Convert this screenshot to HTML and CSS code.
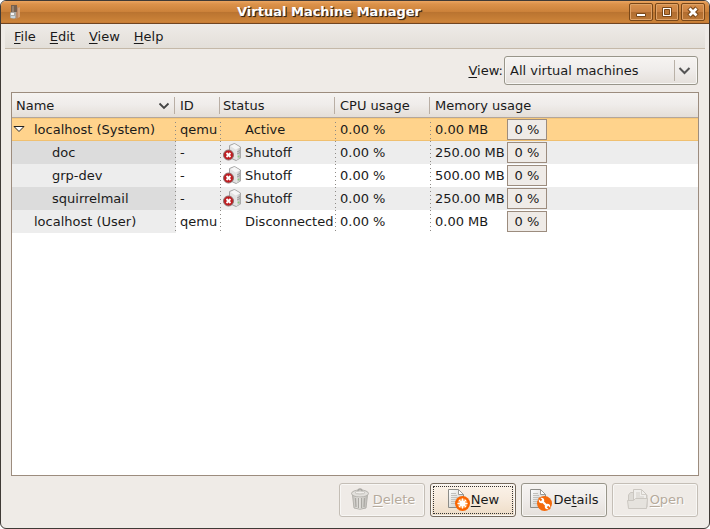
FILE: index.html
```html
<!DOCTYPE html>
<html lang="en">
<head>
<meta charset="utf-8">
<title>Virtual Machine Manager</title>
<link rel="stylesheet" href="styles.css">
</head>
<body>
<svg class="defs" aria-hidden="true">
  <defs>
    <linearGradient id="paper" x1="0" y1="0" x2="1" y2="1"><stop offset="0" stop-color="#fff"/><stop offset="1" stop-color="#c4c4c0"/></linearGradient>
    <linearGradient id="side" x1="0" y1="0" x2="1" y2="0"><stop offset="0" stop-color="#ececec"/><stop offset="1" stop-color="#b4b4b4"/></linearGradient>
    <linearGradient id="bin" x1="0" y1="0" x2="1" y2="0"><stop offset="0" stop-color="#c4c2be"/><stop offset=".45" stop-color="#eceae6"/><stop offset="1" stop-color="#bab8b3"/></linearGradient>
    <symbol id="shutoff" viewBox="0 0 20 20">
      <path d="M6.500 3.500 11.500 1.500 17.500 5v11l-4.500 2.500-6.500-3z" fill="#e2e2e2" stroke="#a2a2a2"/>
      <path d="M13 8 17.500 5.500V16L13 18z" fill="url(#side)"/>
      <path d="M7.500 4l4-2 5.500 3.300-4.500 2.200z" fill="#f6f6f6"/>
      <path d="M14 10l3-1.500M14 12l3-1.500" stroke="#999"/>
      <circle cx="15.500" cy="14.500" r="1" fill="#8aca80"/>
      <circle cx="5.500" cy="13" r="5" fill="#c01c20" stroke="#8c7070"/>
      <path d="M3.500 11l4 4m0-4-4 4" stroke="#fff" stroke-width="1.800"/>
    </symbol>
    <symbol id="page" viewBox="0 0 24 24">
      <path d="M1.500 1.500h10l5 5v13h-15z" fill="url(#paper)" stroke="#8c8c88"/>
      <path d="M11.500 1.500v5h5z" fill="#fff" stroke="#9a9a96"/>
      <path d="M4 5.500h5M4 7.500h6M4 9.500h10M4 11.500h9M4 13.500h6M4 15.500h4" stroke="#c0c0bc"/>
    </symbol>
  </defs>
</svg>
<div class="window">
  <header class="titlebar">
    <svg class="app-icon" viewBox="0 0 16 16" aria-hidden="true">
      <path d="M9 2l2 1v11l-2 1z" fill="#b98a68"/><path d="M11 4l2-1v10l-2 1z" fill="#d2a27a"/>
      <path d="M4 1h6v7H4z" fill="#77604e"/><path d="M5 2h2v6H5z" fill="#98826e"/>
      <path d="M4 8h5v6l-2 1-4-1V9z" fill="#aaa9a4"/><path d="M4 9h3v2H4z" fill="#f4f4f4"/><path d="M4 12h4v2H4z" fill="#c9d4da"/>
    </svg>
    <h1 class="title">Virtual Machine Manager</h1>
    <div class="window-controls">
      <button class="control" aria-label="Minimize"><svg viewBox="0 0 22 16"><path d="M6.500 9.500h9v3h-9z" fill="#fff" stroke="#794718"/></svg></button>
      <button class="control" aria-label="Maximize"><svg viewBox="0 0 22 16"><path d="M6.500 3.500h9v9h-9z" fill="#fff" stroke="#794718"/><path d="M8.500 5.500h5v5h-5z" fill="#bd7a3a" stroke="#794718"/></svg></button>
      <button class="control" aria-label="Close"><svg viewBox="0 0 22 16"><path d="M7 4l8 8m0-8-8 8" stroke="#794718" stroke-width="5"/><path d="M7.500 4.500l7 7m0-7-7 7" stroke="#fff" stroke-width="2.800"/></svg></button>
    </div>
  </header>
  <nav class="menubar">
    <button class="menu"><u>F</u>ile</button>
    <button class="menu"><u>E</u>dit</button>
    <button class="menu"><u>V</u>iew</button>
    <button class="menu"><u>H</u>elp</button>
  </nav>
  <main class="content">
    <div class="filter">
      <label for="filter"><u>V</u>iew:</label>
      <div class="combo">
        <select id="filter"><option>All virtual machines</option></select>
        <svg class="combo-arrow" viewBox="0 0 24 22" aria-hidden="true"><path d="M.5 0v21" stroke="#b9b1a7"/><path d="M5.500 8l5 5 5-5" fill="none" stroke="#555" stroke-width="2"/></svg>
      </div>
    </div>
    <div class="pane">
      <table class="machines">
        <colgroup><col class="col-name"><col class="col-id"><col class="col-status"><col class="col-cpu"><col></colgroup>
        <thead>
          <tr>
            <th class="name"><button class="sort">Name<svg viewBox="0 0 12 8" aria-hidden="true"><path d="M1.500 1.500 6 6l4.500-4.500" fill="none" stroke="#444" stroke-width="1.800"/></svg></button></th>
            <th>ID</th><th class="status-head">Status</th><th>CPU usage</th><th>Memory usage</th>
          </tr>
        </thead>
        <tbody>
          <tr class="selected">
            <td class="name host"><button class="expander" aria-label="Collapse localhost (System)"><svg viewBox="0 0 12 8"><path d="M1 1.500h10L6 6.500z" fill="#fff" stroke="#222"/></svg></button>localhost (System)</td>
            <td>qemu</td><td class="status">Active</td><td>0.00 %</td>
            <td class="memory"><span class="usage"><span>0.00 MB</span><span class="meter">0 %</span></span></td>
          </tr>
          <tr>
            <td class="name guest">doc</td><td>-</td>
            <td class="status"><svg class="state"><use href="#shutoff"/></svg>Shutoff</td><td>0.00 %</td>
            <td class="memory"><span class="usage"><span>250.00 MB</span><span class="meter">0 %</span></span></td>
          </tr>
          <tr>
            <td class="name guest">grp-dev</td><td>-</td>
            <td class="status"><svg class="state"><use href="#shutoff"/></svg>Shutoff</td><td>0.00 %</td>
            <td class="memory"><span class="usage"><span>500.00 MB</span><span class="meter">0 %</span></span></td>
          </tr>
          <tr>
            <td class="name guest">squirrelmail</td><td>-</td>
            <td class="status"><svg class="state"><use href="#shutoff"/></svg>Shutoff</td><td>0.00 %</td>
            <td class="memory"><span class="usage"><span>250.00 MB</span><span class="meter">0 %</span></span></td>
          </tr>
          <tr>
            <td class="name host">localhost (User)</td><td>qemu</td>
            <td class="status">Disconnected</td><td>0.00 %</td>
            <td class="memory"><span class="usage"><span>0.00 MB</span><span class="meter">0 %</span></span></td>
          </tr>
        </tbody>
      </table>
    </div>
    <footer class="actions">
      <button class="action" disabled>
        <svg viewBox="0 0 24 24" aria-hidden="true"><path d="M3.500 7h15l-1.500 13q-6 2.500-12 0z" fill="url(#bin)" stroke="#b4b2ad"/><path d="M6.500 10l.5 9M9.500 10v10M12.500 10v10M15.500 10l-.5 9" stroke="#aaa8a3" stroke-width="1.300"/><ellipse cx="11" cy="5.500" rx="8.500" ry="3.500" fill="#e2e0dc" stroke="#b4b2ad"/><ellipse cx="11" cy="4.500" rx="5" ry="1.500" fill="#f1efec" stroke="#c3c1bc"/><path d="M9 3q0-2 2-2t2 2" fill="none" stroke="#aaa8a3" stroke-width="1.300"/></svg>
        <span><u>D</u>elete</span>
      </button>
      <button class="action default">
        <svg viewBox="0 0 24 24" aria-hidden="true"><use href="#page"/><circle cx="15.500" cy="15.500" r="7.500" fill="#fa6400"/><circle cx="15.500" cy="15.500" r="5" fill="#ffa860"/><path d="M15.500 10.500v10M10.500 15.500h10M12 12l7 7M19 12l-7 7" stroke="#fff" stroke-width="1.100"/><circle cx="15.500" cy="15.500" r="3" fill="#fff"/></svg>
        <span><u>N</u>ew</span>
      </button>
      <button class="action">
        <svg viewBox="0 0 24 24" aria-hidden="true"><use href="#page"/><circle cx="15.500" cy="15.500" r="7.500" fill="#f46a0c"/><path d="M13 13l5 5" stroke="#fff" stroke-width="2.200"/><circle cx="12.500" cy="12.500" r="2.700" fill="#fff"/><circle cx="18.500" cy="18.500" r="2.700" fill="#fff"/><path d="M10 10l2.500 2.500M21 21l-2.500-2.500" stroke="#f46a0c" stroke-width="2"/></svg>
        <span>De<u>t</u>ails</span>
      </button>
      <button class="action" disabled>
        <svg viewBox="0 0 24 24" aria-hidden="true"><path d="M2.500 19V7l2-2.500h5L11 7h10v12z" fill="#dedbd6" stroke="#cbc7c1"/><path d="M7.500 12V1.500h8l5 5V12z" fill="#f0eeeb" stroke="#cbc7c1"/><path d="M15.500 1.500v5h5M10 5h4M10 7h4M10 9h8" fill="none" stroke="#d2cec8"/><path d="M1.500 12.500h6l2-2h12l-1 10h-18z" fill="#e6e3de" stroke="#cbc7c1"/></svg>
        <span><u>O</u>pen</span>
      </button>
    </footer>
  </main>
</div>
</body>
</html>
```
FILE: styles.css
```css
* { box-sizing: border-box; }
body {
  margin: 0;
  background: #fff;
  color: #1a1a1a;
  font: 13px/16px "DejaVu Sans", sans-serif;
}
button, select { font: inherit; color: inherit; margin: 0; }
u { text-decoration-thickness: 1px; text-underline-offset: 2px; text-decoration-skip-ink: none; }
.defs { position: absolute; width: 0; height: 0; }

.window {
  display: flex;
  flex-direction: column;
  min-height: 100vh;
  border: 1px solid #3f3a36;
  border-radius: 6px;
  overflow: hidden;
  background: #efebe7;
}

.titlebar {
  display: grid;
  grid-template-columns: 24px 1fr 78px;
  align-items: center;
  height: 23px;
  padding: 0 4px 0 6px;
  border-bottom: 1px solid #704522;
  background: linear-gradient(#eba561 0, #dc924a 3px, #cb8139 11px, #b97330 11px, #cd8439 21px, #c27530);
}
.app-icon { width: 16px; height: 16px; }
.title {
  margin: 0;
  color: #fff;
  font-size: 13px;
  font-weight: bold;
  text-align: center;
  text-shadow: 1px 1px 1px #3a2819, 1px 1px 0 #3a2819;
}
.window-controls { display: flex; justify-content: flex-end; gap: 2px; }
.control {
  display: block;
  width: 24px;
  height: 18px;
  padding: 0;
  border: 1px solid #794718;
  border-radius: 2px;
  background: linear-gradient(#d9914c, #c98042 50%, #b16d30 50%, #bd7836);
  box-shadow: inset 0 0 0 1px #dfa267;
}
.control svg { display: block; width: 22px; height: 16px; }

.menubar {
  display: flex;
  height: 25px;
  margin: 0 4px;
  padding: 0 2px;
  border-bottom: 1px solid #c4b8a8;
  background: linear-gradient(#eeebe7, #e3dfd9);
}
.menu { padding: 2px 7px 0; border: 0; background: none; }

.content {
  display: flex;
  flex: 1;
  flex-direction: column;
  padding: 7px 10px 11px;
}
.filter {
  display: flex;
  align-items: center;
  justify-content: flex-end;
  gap: 1px;
  padding-right: 1px;
}
.combo { position: relative; width: 194px; }
.combo select {
  display: block;
  width: 100%;
  height: 29px;
  padding: 0 28px 0 5px;
  border: 1px solid #98958a;
  border-radius: 3px;
  appearance: none;
  background: linear-gradient(#f6f4f2, #efecea 50%, #e5e0db);
  box-shadow: inset 0 0 0 1px #f8f7f5;
}
.combo-arrow { position: absolute; right: 0; top: 4px; width: 24px; height: 22px; pointer-events: none; }

.pane {
  flex: 1;
  margin-top: 7px;
  border: 1px solid #9c8c7e;
  background: #fff;
}
.machines { width: 100%; border-collapse: separate; border-spacing: 0; table-layout: fixed; }
.col-name { width: 164px; }
.col-id { width: 45px; }
.col-status { width: 115px; }
.col-cpu { width: 95px; }
th, td { padding: 0 0 0 4px; font-weight: normal; text-align: left; white-space: nowrap; }
th {
  height: 25px;
  padding-top: 1px;
  border-bottom: 1px solid #b3a69b;
  background:
    linear-gradient(#b9aea4, #b9aea4) right 1px center / 1px 17px no-repeat,
    linear-gradient(#f5f3f1, #efecea 50%, #e4ded8);
}
th:last-child { background: linear-gradient(#f5f3f1, #efecea 50%, #e4ded8); }
th.status-head { padding-left: 2px; }
.sort {
  display: flex;
  align-items: center;
  justify-content: space-between;
  width: 100%;
  padding: 0 6px 0 0;
  border: 0;
  background: none;
}
.sort svg { width: 12px; height: 8px; }
td { height: 23px; background: repeating-linear-gradient(#8d8a86 0 1px, transparent 1px 4px) right top / 1px 100% no-repeat; }
td:last-child { background: none; }
tbody tr:nth-child(even) { background: #ededed; }
td.name { background-color: #ededed; }
tr:nth-child(even) td.name { background-color: #dcdcdc; }
tbody tr.selected, tr.selected td.name { background-color: #ffd38c; }
tr.selected td { box-shadow: inset 0 1px #f7c878, inset 0 -1px #f0c070; }
td.host { position: relative; padding-left: 22px; }
td.guest { padding-left: 40px; }
.expander {
  position: absolute;
  left: 1px;
  top: 7px;
  width: 12px;
  height: 8px;
  padding: 0;
  border: 0;
  background: none;
}
.expander svg { display: block; width: 12px; height: 8px; }
td.status { position: relative; padding-left: 24px; }
.state { position: absolute; left: 2px; top: 1px; width: 20px; height: 20px; }
.usage { display: grid; grid-template-columns: 72px 40px; align-items: center; }
.meter { height: 21px; border: 1px solid #9c8c7e; background: #efebe7; line-height: 19px; text-align: center; }

.actions {
  display: flex;
  justify-content: flex-end;
  gap: 5px;
  margin-top: 7px;
  padding-right: 1px;
}
.action {
  display: flex;
  align-items: center;
  justify-content: center;
  width: 86px;
  height: 34px;
  padding: 0;
  border: 1px solid #98958a;
  border-radius: 3px;
  background: linear-gradient(#f6f4f2, #efecea 50%, #e5e0db);
  box-shadow: inset 0 0 0 1px #f8f7f5;
}
.action svg { width: 24px; height: 24px; }
.action.default {
  border-color: #75695c;
  background: linear-gradient(#fbf3ea, #f6e9db 50%, #eedcc6);
  outline: 1px dotted #333;
  outline-offset: -4px;
}
.action:disabled {
  border-color: #c4beb6;
  background: #efebe7;
  color: #b5aa9c;
  text-shadow: 1px 1px #fff;
}
```
